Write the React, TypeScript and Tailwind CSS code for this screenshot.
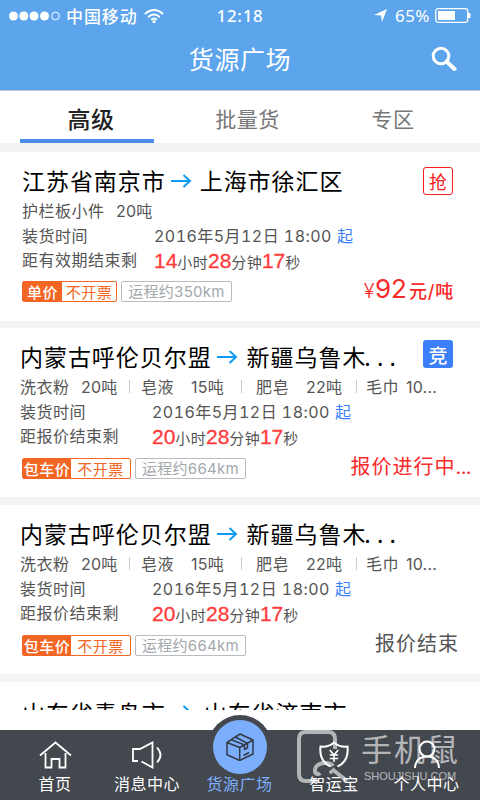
import React from "react";

interface Good {
  name: string;
  weight: string;
  left: string;
  gap: string;
}

interface Order {
  id: number;
  from: string;
  to: string;
  goods: Good[];
  endLabel: string;
  hours: string;
  priceType: string;
  distance: string;
  badge?: "抢" | "竞";
  status: React.ReactNode;
}

const wideGoods: Good[] = [
  { name: "洗衣粉", weight: "20吨", left: "", gap: "w-[61px]" },
  { name: "皂液", weight: "15吨", left: "ml-[11px] pl-[12px]", gap: "w-[50px]" },
  { name: "肥皂", weight: "22吨", left: "ml-[13px] pl-[15px]", gap: "w-[50px]" },
  { name: "毛巾", weight: "10...", left: "ml-[13px] pl-[10px]", gap: "w-[40px]" },
];

const orders: Order[] = [
  {
    id: 1,
    from: "江苏省南京市",
    to: "上海市徐汇区",
    goods: [{ name: "护栏板小件", weight: "20吨", left: "", gap: "w-[94px]" }],
    endLabel: "距有效期结束剩",
    hours: "14",
    priceType: "单价",
    distance: "运程约350km",
    badge: "抢",
    status: (
      <span className="flex items-baseline text-[#f82a2a]">
        <span className="text-[20px] font-light">¥</span>
        <span className="text-[26px] tracking-[0px]">92</span>
        <span className="ml-[2px] text-[18px] tracking-[0.8px] font-medium">元/吨</span>
      </span>
    ),
  },
  {
    id: 2,
    from: "内蒙古呼伦贝尔盟",
    to: "新疆乌鲁木",
    goods: wideGoods,
    endLabel: "距报价结束剩",
    hours: "20",
    priceType: "包车价",
    distance: "运程约664km",
    badge: "竞",
    status: (
      <span className="text-[20px] tracking-[1px] text-[#f82a2a]">
        报价进行中<span className="tracking-[-0.600px]">...</span>
      </span>
    ),
  },
  {
    id: 3,
    from: "内蒙古呼伦贝尔盟",
    to: "新疆乌鲁木",
    goods: wideGoods,
    endLabel: "距报价结束剩",
    hours: "20",
    priceType: "包车价",
    distance: "运程约664km",
    status: <span className="text-[20px] tracking-[1px] text-[#555]">报价结束</span>,
  },
];

function Arrow() {
  return (
    <svg className="h-[14px] w-[21px] shrink-0" viewBox="0 0 21 14" fill="none" stroke="#0f9bf5" strokeWidth="2">
      <path d="M0 7h19M12.500 1l6.500 6-6.500 6" />
    </svg>
  );
}

function StatusBar() {
  return (
    <div className="grid h-[31px] grid-cols-[1fr_auto_1fr] items-center pl-[9px] pr-[9px] text-white">
      <div className="flex items-center">
        <svg className="h-[10px] w-[52px]" viewBox="0 0 52 10" fill="#fff">
          <circle cx="4.500" cy="5" r="4.500" />
          <circle cx="14.800" cy="5" r="4.500" />
          <circle cx="25" cy="5" r="4.500" />
          <circle cx="35.500" cy="5" r="4.500" />
          <circle cx="46.500" cy="5" r="3.800" fill="none" stroke="#fff" />
        </svg>
        <span className="ml-[5px] font-['Noto_Sans_CJK_SC'] text-[17px] leading-none tracking-[0.9px] font-medium">中国移动</span>
        <svg className="ml-[6px] h-[14px] w-[20px]" viewBox="0 0 20 14" fill="none" stroke="#fff" strokeWidth="2">
          <path d="M1 5.200C6-.4 14-.4 19 5.200M4.200 8.200c3.400-3.600 8.200-3.600 11.600 0M7.200 10.800c1.800-1.600 3.800-1.600 5.600 0" />
          <circle cx="10" cy="12.600" r="0.600" />
        </svg>
      </div>
      <span className="font-['Noto_Sans'] text-[17px] font-medium leading-none tracking-[0.7px]">12:18</span>
      <div className="flex items-center justify-end">
        <svg className="h-[13px] w-[13px]" viewBox="0 0 13 13" fill="#fff">
          <path d="M13 0 8 13 7 6.500 0 6z" />
        </svg>
        <span className="ml-[8px] font-['Noto_Sans'] text-[17px] leading-none tracking-[0.5px]">65%</span>
        <svg className="ml-[5px] h-[15px] w-[36px]" viewBox="0 0 36 15" fill="none" stroke="#fff" strokeWidth="1.300">
          <rect x="0.700" y="0.700" width="32" height="13.600" rx="2.500" />
          <rect x="3" y="3" width="17" height="9" fill="#fff" stroke="none" />
          <path d="M34.200 5v5" strokeWidth="2.500" />
        </svg>
      </div>
    </div>
  );
}

function Badge({ text }: { text: "抢" | "竞" }) {
  if (text === "抢") {
    return (
      <span className="mt-[15px] flex h-[28px] w-[30px] items-center justify-center rounded-[3px] border border-[#f82020] font-['Noto_Sans_CJK_SC'] text-[18px] leading-none tracking-normal text-[#f82020]">
        {text}
      </span>
    );
  }
  return (
    <span className="mt-[12px] flex h-[28px] w-[30px] items-center justify-center rounded-[3px] bg-[#3b7ffb] font-['Noto_Sans_CJK_SC'] text-[19px] font-medium leading-none tracking-normal text-white">
      {text}
    </span>
  );
}

function Num({ children }: { children: React.ReactNode }) {
  return (
    <b className="font-['Liberation_Sans'] text-[21px] font-normal tracking-normal text-[#ff3b3b] [-webkit-text-stroke:0.3px_#ff3b3b]">
      {children}
    </b>
  );
}

function OrderCard({ order }: { order: Order }) {
  const first = order.id === 1;
  return (
    <article className={`shrink-0 bg-white ${first ? "h-[169px] pl-[22px]" : "h-[169px] pl-[20px]"}`}>
      <div className="flex h-[49px] pr-[27px]">
        <h2 className="flex flex-1 items-center pt-[8px] font-['Noto_Sans_CJK_SC'] text-[23px] leading-none tracking-[0.95px] whitespace-nowrap text-black">
          <span>{order.from}</span>
          <span className={`ml-[5px] flex ${first ? "mr-[8px]" : "mr-[9px]"}`}>
            <Arrow />
          </span>
          <span>{order.to}</span>
          {!first && <span className="-ml-[2px] tracking-[6.200px]">...</span>}
        </h2>
        {order.badge && <Badge text={order.badge} />}
      </div>
      <div className="flex h-[20px] items-center whitespace-nowrap">
        {order.goods.map((g, i) => (
          <span key={g.name} className={`relative flex ${g.left}`}>
            {i > 0 && <i className="absolute left-0 top-[5px] h-[13px] w-px bg-[#ccc]" />}
            <span className={g.gap}>{g.name}</span>
            <span className="w-[37px] tracking-[0.200px]">{g.weight}</span>
          </span>
        ))}
      </div>
      <div className="flex h-[29px] items-center">
        <span className="w-[132px]">装货时间</span>
        <span className="tracking-[0.450px] tabular-nums">2016年5月12日 18:00</span>
        <span className="ml-[5px] text-[#3b7ffb]">起</span>
      </div>
      <div className="flex h-[20px] items-center">
        <span className="w-[132px]">{order.endLabel}</span>
        <span className="flex items-baseline text-[15px] leading-none tracking-[0.300px]">
          <Num>{order.hours}</Num>小时
          <Num>28</Num>分钟
          <Num>17</Num>秒
        </span>
      </div>
      <div className={`flex items-start justify-between text-[15px] leading-none ${first ? "pt-[11px]" : "pt-[12px]"}`}>
        <div className={`flex ${first ? "" : "ml-[2px]"}`}>
          <span className="flex h-[21px] items-center rounded-[2px] border border-[#f26522] font-['Noto_Sans_CJK_SC'] text-[#f26522]">
            <span className={`flex h-full items-center justify-center bg-[#f26522] font-medium text-white ${first ? "w-[39px]" : "w-[48px]"}`}>
              {order.priceType}
            </span>
            <span className={`text-center ${first ? "w-[54px]" : "w-[59px]"}`}>不开票</span>
          </span>
          <span className="ml-[4px] flex h-[21px] w-[111px] items-center justify-center rounded-[2px] border border-[#b8bcc0] tracking-[0.300px] text-[#a3a8ac]">
            {order.distance}
          </span>
        </div>
        <div className={first ? "-mt-[5px] pr-[26px]" : order.id === 2 ? "-mt-[1px] pr-[9px]" : "-mt-[1px] pr-[21px]"}>{order.status}</div>
      </div>
    </article>
  );
}

function TabBar() {
  return (
    <nav className="relative flex h-[70px] bg-[#43474e] font-['Noto_Sans_CJK_SC'] text-[16px] text-white">
      <div className="flex w-[110px] flex-col items-center pt-[11px]">
        <svg className="h-[28px] w-[33px]" viewBox="0 0 33 28" fill="none" stroke="#fff" strokeWidth="1.800">
          <path d="M1 14.500 16.500 1.500 32 14.500M6.500 12v14.500h6V18h8v8.500h6V12" />
        </svg>
        <span className="mt-[3px] leading-[22px]">首页</span>
      </div>
      <div className="flex w-[74px] flex-col items-center pt-[11px]">
        <svg className="h-[28px] w-[32px]" viewBox="0 0 32 28" fill="none" stroke="#fff" strokeWidth="1.800">
          <path d="M7 20H2V8h7L21.500 1.500v25L10.500 20.500M26 6.500q7 7.500 0 15" />
        </svg>
        <span className="mt-[3px] leading-[22px] whitespace-nowrap">消息中心</span>
      </div>
      <div className="relative flex w-[111px] flex-col items-center pt-[42px] text-[#7baefc]">
        <span className="absolute -top-[15px] left-[24px] flex size-[64px] items-center justify-center rounded-full bg-[#43474e]">
          <span className="flex size-[54px] items-center justify-center rounded-full bg-[#7baefc]">
            <svg className="h-[28px] w-[28px]" viewBox="0 0 28 28" fill="none" stroke="#343a44" strokeWidth="1.500" strokeLinejoin="round">
              <path d="M1 9.500 14 1l13 6v14L13.700 27.500 1 21.700zM1 9.500l12.700 5L27 7M13.700 14.500v13M5.300 6.700l13.200 5.200v4.600l3-1.700v-4.500L9.300 4M17.500 22.500l5.500-3" />
            </svg>
          </span>
        </span>
        <span className="leading-[22px]">货源广场</span>
      </div>
      <div className="flex w-[78px] flex-col items-center pt-[11px]">
        <svg className="h-[28px] w-[30px]" viewBox="0 0 30 28" fill="none" stroke="#fff" strokeWidth="2">
          <path d="M11.500 25.500C3.500 22 .5 14.500 1.500 5.500Q9.500 6.500 15 1.500q5.500 5 13.500 4c1 9-2 16.500-10 20" />
          <path d="M10.800 9l4.200 5 4.200-5M15 14v7M10.800 14h8.400M10.800 17.500h8.400" strokeWidth="1.600" />
        </svg>
        <span className="mt-[3px] leading-[22px]">智运宝</span>
      </div>
      <div className="flex flex-1 flex-col items-center pt-[10px]">
        <svg className="h-[29px] w-[28px]" viewBox="0 0 28 29" fill="none" stroke="#fff" strokeWidth="2">
          <circle cx="14" cy="9" r="7.500" />
          <path d="M2 28C2.500 20 7.500 16.500 14 16.500S25.500 20 26 28" />
        </svg>
        <span className="mt-[3px] leading-[22px] whitespace-nowrap">个人中心</span>
      </div>
      {/* 水印 */}
      <div className="pointer-events-none absolute left-[297px] top-0 flex text-white opacity-60">
        <svg className="h-[54px] w-[53px]" viewBox="0 0 53 54" fill="none" stroke="#fff" strokeWidth="4">
          <path d="M38 19V9q0-7-7-7H9Q2 2 2 9v35q0 7 7 7h13" />
          <path d="M36 36c-4-6-19-3-18 5 0 3 3 4 5 2M35 39l15 12" />
          <circle cx="34" cy="42" r="1" strokeWidth="2" />
        </svg>
        <div className="ml-[11px]">
          <div className="text-[31px] font-normal leading-[36px] tracking-[2px]">手机鼠</div>
          <div className="ml-[3px] mt-[4px] font-['Liberation_Sans'] text-[11px] leading-[12px] tracking-[0px]">SHOUJISHU.COM</div>
        </div>
      </div>
    </nav>
  );
}

export default function App() {
  return (
    <div className="flex h-[800px] w-[480px] flex-col overflow-hidden bg-[#f3f3f3] font-[Inter,'Noto_Sans_CJK_SC',sans-serif] text-[16px] tracking-[0.500px] text-[#555]">
      <header className="h-[91px] shrink-0 border-b border-[#b9c4d0] bg-[#5ca5ec]">
        <StatusBar />
        <div className="grid h-[55px] grid-cols-[1fr_auto_1fr] items-center text-white">
          <span />
          <h1 className="font-['Noto_Sans_CJK_SC'] text-[25px] font-normal leading-none tracking-[0.600px]">货源广场</h1>
          <svg className="mr-[23px] size-[26px] justify-self-end" viewBox="0 0 26 26" fill="none" stroke="#fff">
            <circle cx="10" cy="10" r="7.800" strokeWidth="3" />
            <path d="m15.500 15.500 8 7.500" strokeWidth="4" strokeLinecap="round" />
          </svg>
        </div>
      </header>
      <div className="flex h-[52px] shrink-0 bg-white font-['Noto_Sans_CJK_SC'] text-[21px] text-[#777]">
        <div className="ml-[20px] flex w-[134px] items-center justify-center border-b-4 border-[#4a8eeb] pl-[8px] pt-[6px] text-[23px] font-medium leading-none text-[#222]">高级</div>
        <div className="flex w-[187px] items-center justify-center pt-[4px]">批量货</div>
        <div className="flex w-[104px] items-center justify-center pt-[4px]">专区</div>
      </div>
      <main className="flex min-h-0 flex-1 flex-col overflow-hidden bg-[#f3f3f3] pt-[9px]">
        {orders.map((o) => (
          <div key={o.id} className={o.id === 1 ? "mb-[7px]" : "mb-[8px]"}>
            <OrderCard order={o} />
          </div>
        ))}
        <div className="flex h-[48px] shrink-0 flex-col bg-white pl-[22px]">
          <div className="flex h-[28px] items-start overflow-hidden pt-[19px] font-['Noto_Sans_CJK_SC'] text-[23px] leading-none tracking-[0.950px] whitespace-nowrap text-black">
            <span>山东省青岛市</span>
            <span className="ml-[5px] mr-[12px] mt-[4px] flex">
              <Arrow />
            </span>
            <span>山东省济南市</span>
          </div>
        </div>
      </main>
      <TabBar />
    </div>
  );
}
